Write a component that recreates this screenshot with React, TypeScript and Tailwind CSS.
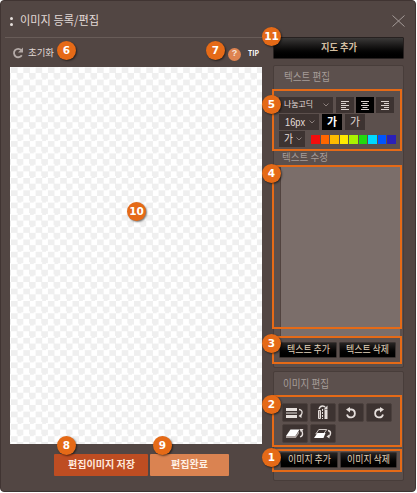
import { ReactNode } from "react";

const SWATCHES = [
  "bg-[#f20d0d]",
  "bg-[#ff6600]",
  "bg-[#ffbb00]",
  "bg-[#ffea00]",
  "bg-[#aaf200]",
  "bg-[#22d80f]",
  "bg-[#00d9ff]",
  "bg-[#0055ff]",
  "bg-[#2a20b8]",
];

// Numbered guide markers, placed over the dialog
const MARKERS = [
  { n: 6, pos: "left-[57px] top-[41px]" },
  { n: 7, pos: "left-[206px] top-[41px]" },
  { n: 11, pos: "left-[262px] top-[27px]" },
  { n: 5, pos: "left-[262px] top-[95px]" },
  { n: 4, pos: "left-[262px] top-[164px]" },
  { n: 3, pos: "left-[262px] top-[334px]" },
  { n: 2, pos: "left-[262px] top-[395px]" },
  { n: 1, pos: "left-[262px] top-[448px]" },
  { n: 8, pos: "left-[57px] top-[436px]" },
  { n: 9, pos: "left-[153px] top-[436px]" },
  { n: 10, pos: "left-[127px] top-[202px]" },
];

const FRAMES = [
  "top-[89px] h-[62px]",
  "top-[165px] h-[164px]",
  "top-[336px] h-[28px]",
  "top-[395px] h-[52px]",
  "top-[449px] h-[23px]",
];

function Text({ width, size, children, bold, className = "" }: {
  width: number;
  size: number;
  children: string;
  bold?: boolean;
  className?: string;
}) {
  return (
    <svg width={width} height={size + 4} className={`block shrink-0 overflow-visible ${className}`}>
      <text
        x={0}
        y={size}
        fontSize={size}
        fontWeight={bold ? 700 : 400}
        fill="currentColor"
        textLength={width}
        lengthAdjust="spacingAndGlyphs"
      >
        {children}
      </text>
    </svg>
  );
}

function Chevron() {
  return (
    <svg width="6" height="4" viewBox="0 0 6 4" fill="none" stroke="#8b7f7c" className="shrink-0">
      <path d="M0.5 0.5L3 3L5.5 0.5" />
    </svg>
  );
}

function AlignIcon({ x }: { x: number }) {
  return (
    <svg width="8" height="9" viewBox="0 0 8 9" fill="#d9d1ce">
      <path d="M0 0h8v1H0z" />
      <path d={`M${x} 2h5v1h-5z`} />
      <path d="M0 4h8v1H0z" />
      <path d={`M${x} 6h5v1h-5z`} />
      <path d="M0 8h8v1H0z" />
    </svg>
  );
}

function Tool({ children }: { children: ReactNode }) {
  return (
    <button className="flex h-[19px] w-[26px] items-center justify-center rounded-[2px] border border-[#4b403d] bg-[#3d3331]">
      {children}
    </button>
  );
}

function DarkButton({ children, width, text }: { children: string; width: string; text: number }) {
  return (
    <button className={`flex h-[16px] ${width} items-center justify-center rounded-[1px] border border-[#3b3331] bg-linear-to-b from-[#272423] to-black text-[#e3d3ba]`}>
      <Text width={text} size={10}>{children}</Text>
    </button>
  );
}

export default function App() {
  return (
    <div className="relative h-[493px] w-[417px] overflow-hidden bg-white font-['Noto_Sans_CJK_KR','Liberation_Sans',sans-serif]">
      <div className="flex h-[492px] w-[416px] flex-col rounded-[4px] border border-[#403432] bg-[#524643]">
        <header className="flex h-[36px] shrink-0 items-center pr-[10px] pl-[9px]">
          <div className="mt-[4px] flex flex-col gap-[3px]">
            <i className="block h-[3px] w-[3px] rounded-full bg-[#e6dfdc]" />
            <i className="block h-[3px] w-[3px] rounded-full bg-[#e6dfdc]" />
          </div>
          <Text width={79} size={12} className="mt-[3px] ml-[7px] text-[#e2dad7]">이미지 등록/편집</Text>
          <svg width="13" height="12" viewBox="0 0 13 12" stroke="#a49b98" className="mt-[4px] ml-auto">
            <path d="M0.5 0.5L12.5 11.5M12.5 0.5L0.5 11.5" />
          </svg>
        </header>

        <div className="flex">
          <main className="ml-[4px] w-[257px] border-t border-[#685c58]">
            <div className="flex h-[29px] items-center pl-[7px]">
              <svg width="12" height="12" viewBox="0 0 12 12" fill="none" stroke="#b4aaa7" strokeWidth="1.8">
                <path d="M9.8 8.2A4.2 4.2 0 1 1 9.3 3.2" />
                <path d="M11 0.5V5.5H6z" fill="#b4aaa7" stroke="none" />
              </svg>
              <Text width={26} size={9.5} className="ml-[4px] text-[#e0d8d5]">초기화</Text>
              <span className="mt-[3px] ml-auto flex h-[13px] w-[13px] items-center justify-center rounded-full bg-[#de8350] font-['Liberation_Sans',sans-serif] text-[9px] font-bold text-[#f5e4da]">?</span>
              <Text width={11} size={7} bold className="mt-[4px] mr-[3px] ml-[7px] text-white">TIP</Text>
            </div>
            <div className="ml-[5px] h-[377px] w-[252px] bg-[repeating-conic-gradient(#efefef_0_25%,#ffffff_0_50%)] bg-[length:12.3px_12.3px] bg-[position:1px_6px]" />
            <div className="mt-[10px] ml-[49px] flex gap-[2px]">
              <button className="flex h-[22px] w-[94px] items-center justify-center rounded-[1px] bg-[#be4d22] text-[#ffe9dc]">
                <Text width={67} size={10} bold>편집이미지 저장</Text>
              </button>
              <button className="flex h-[22px] w-[79px] items-center justify-center rounded-[1px] bg-[#da8351] text-[#fff0e5]">
                <Text width={37} size={10} bold>편집완료</Text>
              </button>
            </div>
          </main>

          <aside className="ml-[11px] w-[131px]">
            <button className="flex h-[22px] w-full items-center justify-center rounded-[1px] border border-[#272120] bg-linear-to-b from-[#3b3938] to-black text-[#d3bea1]">
              <Text width={36} size={10} bold>지도 추가</Text>
            </button>

            <section className="mt-[6px] h-[303px] rounded-[2px] border border-[#483d3a] bg-[#5c504d]">
              <Text width={46} size={11} className="mt-[4px] ml-[10px] text-[#a69c99]">텍스트 편집</Text>
              <div className="mt-[12px] flex gap-[3px] pl-[5px]">
                <div className="flex h-[16px] w-[54px] items-center justify-between bg-[#3d3331] pr-[4px] pl-[5px] text-[#e6dedb]">
                  <Text width={29} size={8}>나눔고딕</Text>
                  <Chevron />
                </div>
                <div className="flex gap-[2px]">
                  <button className="flex h-[16px] w-[18px] items-center justify-center bg-[#3d3331]"><AlignIcon x={0} /></button>
                  <button className="flex h-[16px] w-[18px] items-center justify-center bg-black"><AlignIcon x={1.5} /></button>
                  <button className="flex h-[16px] w-[18px] items-center justify-center bg-[#3d3331]"><AlignIcon x={3} /></button>
                </div>
              </div>
              <div className="mt-[1px] flex gap-[3px] pl-[5px]">
                <div className="flex h-[16px] w-[40px] items-center justify-between bg-[#3d3331] pr-[4px] pl-[6px] font-['Liberation_Sans',sans-serif] text-[#e6dedb]">
                  <Text width={20} size={10.5}>16px</Text>
                  <Chevron />
                </div>
                <button className="flex h-[16px] w-[20px] items-center justify-center bg-black text-white"><Text width={10} size={11} bold>가</Text></button>
                <button className="flex h-[16px] w-[20px] items-center justify-center bg-[#3d3331] text-[#e0d8d5]"><Text width={10} size={11}>가</Text></button>
              </div>
              <div className="mt-[1px] flex items-center pl-[5px]">
                <div className="flex h-[16px] w-[26px] items-center justify-between bg-[#3d3331] pr-[3px] pl-[5px] text-[#e6dedb]">
                  <Text width={9} size={11}>가</Text>
                  <Chevron />
                </div>
                <div className="ml-[6px] flex gap-px">
                  {SWATCHES.map((c) => (
                    <i key={c} className={`block h-[9px] w-[8.5px] ${c}`} />
                  ))}
                </div>
              </div>
              <Text width={46} size={10} className="mt-[4px] ml-[8px] text-[#a69c99]">텍스트 수정</Text>
              <div className="mt-[2px] ml-[6px] h-[169px] w-[120px] border-l border-[#51433f] bg-[#7b6e6a]" />
              <div className="mt-[6px] flex gap-[2px] pl-[5px]">
                <DarkButton width="w-[58px]" text={43}>텍스트 추가</DarkButton>
                <DarkButton width="w-[57px]" text={43}>텍스트 삭제</DarkButton>
              </div>
            </section>

            <section className="mt-[3px] h-[110px] rounded-[2px] border border-[#483d3a] bg-[#5c504d]">
              <Text width={46} size={11} className="mt-[5px] ml-[9px] text-[#a69c99]">이미지 편집</Text>
              <div className="mt-[11px] grid w-fit grid-cols-4 gap-x-[2px] gap-y-[2px] pl-[8px]">
                <Tool>
                  <svg width="18" height="12" viewBox="0 0 18 12" fill="#e6dfdc" className="shrink-0">
                    <path d="M0 1h11v3H0zM0 5.5h11v1H0zM0 8h11v3H0z" />
                    <path d="M13 2.5Q16.5 3 16 6Q15.7 8.5 14 9" fill="none" stroke="#e6dfdc" strokeWidth="1.3" />
                    <path d="M12.5 9L15.5 6.8V11z" />
                  </svg>
                </Tool>
                <Tool>
                  <svg width="12" height="15" viewBox="0 0 12 15" fill="#e6dfdc" className="shrink-0">
                    <path d="M1.5 5.5h2v8h-2z" fill="#8b817e" stroke="#e6dfdc" />
                    <path d="M5 4h1v2H5zM5 7h1v2H5zM5 10h1v2H5zM5 13h1v1H5z" />
                    <path d="M7.5 5h3v9h-3z" />
                    <path d="M2 4Q3 1 5.5 1Q7.5 1 8.5 2.5" fill="none" stroke="#e6dfdc" strokeWidth="1.3" />
                    <path d="M10.5 0.5V4.5H6.5z" />
                  </svg>
                </Tool>
                <Tool>
                  <svg width="12" height="12" viewBox="0 0 12 12" fill="none" stroke="#e6dfdc" strokeWidth="1.8" className="shrink-0">
                    <path d="M4 2.5H6.5A4 4 0 1 1 2 7.5" />
                    <path d="M5 0v5.5L1 2.5z" fill="#e6dfdc" stroke="none" />
                  </svg>
                </Tool>
                <Tool>
                  <svg width="12" height="12" viewBox="0 0 12 12" fill="none" stroke="#e6dfdc" strokeWidth="1.8" className="shrink-0">
                    <path d="M8 2.5H5.5A4 4 0 1 0 10 7.5" />
                    <path d="M7 0v5.5L11 2.5z" fill="#e6dfdc" stroke="none" />
                  </svg>
                </Tool>
                <Tool>
                  <svg width="18" height="12" viewBox="0 0 18 12" fill="#e6dfdc" className="shrink-0">
                    <path d="M4.5 1.5h9L9.5 8H0z" fill="#ffffff" />
                    <path d="M0 8h9.5L13 3v2.5L9.8 10H0z" fill="#aaa09d" />
                    <path d="M14 9Q17 8 16.5 5Q16.2 3 15.5 2.5" fill="none" stroke="#e6dfdc" strokeWidth="1.3" />
                    <path d="M13.5 1h4l-2.5 3.5z" />
                  </svg>
                </Tool>
                <Tool>
                  <svg width="18" height="12" viewBox="0 0 18 12" fill="#e6dfdc" className="shrink-0">
                    <path d="M4.8 1.5h8L9.5 6H1.8z" fill="none" stroke="#d1c9c6" />
                    <path d="M3.5 5h8L9.5 10H0z" fill="#ffffff" />
                    <path d="M14 2.5Q17 3 16.5 6Q16.2 8 14.5 8.5" fill="none" stroke="#e6dfdc" strokeWidth="1.3" />
                    <path d="M12.5 8.5L15.5 6.3V10.5z" />
                  </svg>
                </Tool>
              </div>
              <div className="mt-[9px] flex gap-[2px] pl-[6px]">
                <DarkButton width="w-[58px]" text={43}>이미지 추가</DarkButton>
                <DarkButton width="w-[57px]" text={43}>이미지 삭제</DarkButton>
              </div>
            </section>
          </aside>
        </div>
      </div>

      {FRAMES.map((f) => (
        <div key={f} className={`absolute left-[272px] w-[130px] border-2 border-[#e56a17] ${f}`} />
      ))}
      {MARKERS.map((m) => (
        <div
          key={m.n}
          className={`absolute flex h-[19px] w-[19px] items-center justify-center rounded-full bg-[#e56a17] font-['DejaVu_Sans',sans-serif] text-[10.5px] leading-none font-bold text-white shadow-[1px_1px_2px_rgba(0,0,0,0.55)] ${m.pos}`}
        >
          {m.n}
        </div>
      ))}
    </div>
  );
}
